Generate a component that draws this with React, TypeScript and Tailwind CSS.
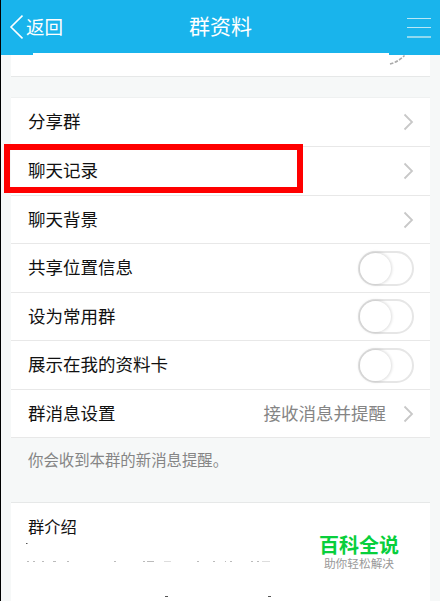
import type { ReactNode } from 'react';

type RowProps = {
  label: string;
  className: string;
  children: ReactNode;
};

function Arrow() {
  return (
    <svg className="h-[18px] w-[11px]" viewBox="0 0 11 18" fill="none">
      <path d="M1.5 1.5L9 9L1.5 16.5" stroke="#c8c8c8" strokeWidth="1.8" />
    </svg>
  );
}

function Toggle() {
  return (
    <div className="h-[35px] w-14 rounded-full border-2 border-[#e6e6e6] bg-white">
      <div className="h-[31px] w-[31px] rounded-full bg-white shadow-[0_0_3px_1px_rgba(0,0,0,0.14)]" />
    </div>
  );
}

function Row({ label, className, children }: RowProps) {
  return (
    <div className={`flex items-center justify-between border-b border-[#e8e8e8] pr-4 pl-[17px] ${className}`}>
      <span className="pb-0.5">{label}</span>
      {children}
    </div>
  );
}

export default function App() {
  return (
    <div className="relative flex h-[601px] w-[440px] flex-col overflow-hidden border-l border-black bg-[#f6f8f8] font-['Noto_Sans_CJK_SC',sans-serif] text-[17.5px] leading-none text-[#111]">
      {/* Header */}
      <header className="grid h-[53px] shrink-0 grid-cols-3 items-center bg-[#19b4ec] pr-[9px] pl-2 text-white">
        <div className="flex items-center gap-[3px]">
          <svg className="h-[26px] w-[14px]" viewBox="0 0 14 26" fill="none">
            <path d="M13.5 1.5L2 13L13.5 24.5" stroke="currentColor" strokeWidth="1.6" />
          </svg>
          <span className="text-[18.5px]">返回</span>
        </div>
        <h1 className="pb-0.5 pl-px text-center text-[21px]">群资料</h1>
        <div className="flex flex-col gap-[7.5px] justify-self-end pt-0.5">
          <div className="h-[1.5px] w-6 bg-[#b9e8f6]" />
          <div className="h-[1.5px] w-6 bg-[#b9e8f6]" />
          <div className="h-0.5 w-6 bg-[#8fd9ef]" />
        </div>
      </header>

      {/* Bottom of the member card, with the header's corners over it */}
      <div className="flex h-6 shrink-0">
        <div className="h-0.5 w-8 bg-[#19b4ec]" />
        <div className="grow" />
        <div className="h-0.5 w-[51px] bg-[#19b4ec]" />
        <div className="absolute top-[53px] left-8 h-[23px] w-[356px] bg-white" />
        <div className="absolute top-[55px] left-2.5 h-[22px] w-[419px] border-b border-[#e6e8e8] bg-white" />
        <svg className="absolute top-[55px] left-[388px] h-[11px] w-[18px]" viewBox="0 0 18 11" fill="none">
          <path d="M1 9Q9 7 15.5 0.5" stroke="#aaa" strokeWidth="1.6" strokeDasharray="3.5 1.5" />
        </svg>
      </div>

      {/* Settings */}
      <section className="mt-5 mr-[10px] ml-2.5 shrink-0 border-t border-[#eff1f1] bg-white">
        <Row label="分享群" className="h-[49px]"><Arrow /></Row>
        <Row label="聊天记录" className="h-[49px]"><Arrow /></Row>
        <Row label="聊天背景" className="h-12"><Arrow /></Row>
        <Row label="共享位置信息" className="h-[49px]"><Toggle /></Row>
        <Row label="设为常用群" className="h-12"><Toggle /></Row>
        <Row label="展示在我的资料卡" className="h-[49px]"><Toggle /></Row>
        <Row label="群消息设置" className="h-12">
          <div className="flex items-center gap-[17px] text-[#858585]">
            <span className="pb-0.5">接收消息并提醒</span>
            <Arrow />
          </div>
        </Row>
      </section>
      <p className="h-16 shrink-0 pt-3.5 pl-[27px] text-[15.4px] text-[#858585]">你会收到本群的新消息提醒。</p>

      {/* Group introduction */}
      <section className="mr-[10px] ml-2.5 flex grow justify-between border-t border-[#e6e8e8] bg-white pr-[31px] pl-[17px]">
        <h2 className="pt-[15px] text-[16.3px]">群介绍</h2>
        <div className="flex flex-col items-center pt-8">
          <strong className="text-[20px] font-bold text-[#08cf3c]">百科全说</strong>
          <span className="mt-[3px] text-[11.7px] leading-[10px] text-[#999]">助你轻松解决</span>
        </div>
        <svg className="absolute top-[540px] left-6 h-[61px] w-[250px]" viewBox="0 0 250 61" fill="none">
          <path d="M1 3.5h1.5M140 56.5h3M243 56.5h3" stroke="#555" />
          <path d="M2 21.5h2M8 21.5h2M17 21.5h2M28 21.5h3M42 21.5h2M89 21.5h2M118 21.5h2M122 21.5h7M172 21.5h2M188 21.5h2M200 21.5h1M205 21.5h2M226 21.5h2M232 21.5h2" stroke="#bbb" />
          <path d="M139 21.5h7M237 21.5h8" stroke="#ddd" />
        </svg>
      </section>

      {/* Highlight on the chat history row */}
      <div className="absolute top-36 left-[3px] h-[49px] w-[299px] border-6 border-[#f00]" />
    </div>
  );
}
